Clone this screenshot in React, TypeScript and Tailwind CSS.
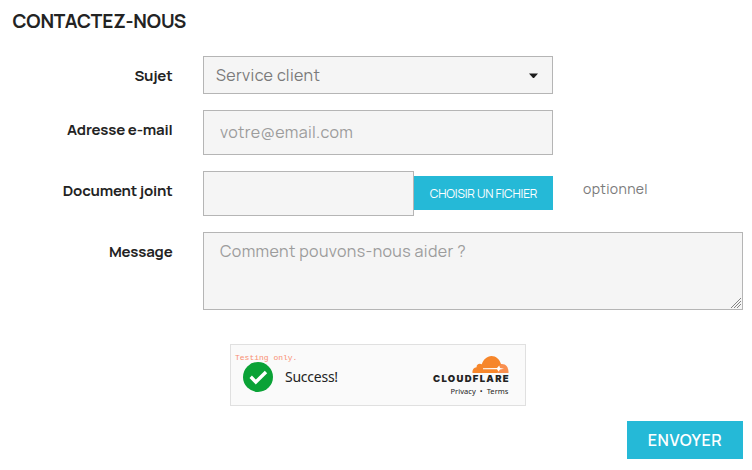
import type { ReactNode } from "react";

function Row({ label, children }: { label: string; children: ReactNode }) {
  return (
    <div className="flex items-start">
      <label className="mr-[30.5px] w-[172.5px] shrink-0 pt-[10px] text-right text-[15px] leading-5 font-bold tracking-[-0.2px] text-[#232323] whitespace-nowrap">
        {label}
      </label>
      {children}
    </div>
  );
}

function CloudflareLogo() {
  return (
    <svg className="mr-px" width="37" height="17" viewBox="0 0 37 17">
      <path d="M0.500 17C0.200 13.500 2 11.500 4.600 11.300C4.200 8.500 7.300 6.800 9.800 8.300C11.300 3.600 15 0 19.500 0C24 0 27.500 3.300 28.800 7.400L29.500 10.500L25.500 17Z" fill="#f6862b" />
      <path d="M25.500 17L28.500 8.200C33 7.300 36.800 10.600 36.500 17Z" fill="#f98f4f" />
      <path d="M11 12.300L25 12.100L27.300 9.500L28 12L32 12.700L28 13.500L26.500 15.500L25 13.300L11 13.200Z" fill="#fff" />
    </svg>
  );
}

const field = "border border-[#b5b5b5] bg-[#f5f5f5] outline-none rounded-none";

export default function App() {
  return (
    <main className="w-[752px] h-[470px] overflow-hidden bg-white font-['Manrope','Inter',sans-serif] text-[#232323]">
      <h1 className="h-[56px] pl-[12.5px] pt-[9px] text-[19px] leading-6 font-bold tracking-[-0.18px]">CONTACTEZ-NOUS</h1>
      <form className="flex flex-col gap-4" onSubmit={(e) => e.preventDefault()}>
        <Row label="Sujet">
          <button type="button" className={`${field} flex h-[38px] w-[350px] items-center justify-between pl-[12px] pr-[14px] text-[16px] tracking-[0.36px] text-[#7a7a7a]`}>
            <span>Service client</span>
            <svg width="9" height="5" viewBox="0 0 9 5"><path d="M0 0.500H9L5 5H4Z" fill="#1c1c1c" /></svg>
          </button>
        </Row>
        <Row label="Adresse e-mail">
          <input placeholder="votre@email.com" className={`${field} h-[45px] w-[350px] px-4 pb-[2px] text-[16px] tracking-[0.36px] placeholder:text-[#9c9c9c]`} />
        </Row>
        <Row label="Document joint">
          <input className={`${field} h-[45px] w-[211px]`} />
          <button type="button" className="mt-[5px] h-[34px] w-[139px] bg-[#25b9d7] pt-px text-[12px] tracking-[-0.16px] text-white whitespace-nowrap">CHOISIR UN FICHIER</button>
          <span className="ml-[30px] pt-[8px] text-[14px] leading-5 tracking-[0.35px] text-[#7a7a7a]">optionnel</span>
        </Row>
        <Row label="Message">
          <div className="relative h-[78px] w-[540px]">
            <textarea placeholder="Comment pouvons-nous aider ?" className={`${field} block h-full w-full resize-none px-4 py-[6px] text-[16px] leading-6 tracking-[0.38px] placeholder:text-[#9c9c9c]`} />
            <svg className="absolute right-[2px] bottom-[2px]" width="10" height="10" viewBox="0 0 10 10" stroke="#777" strokeWidth="0.9">
              <path d="M0 10L10 0M3 10L10 3M6 10L10 6" />
            </svg>
          </div>
        </Row>
      </form>
      <section className="mt-[34px] ml-[230px] flex h-[62px] w-[296px] justify-between border border-[#e0e0e0] bg-[#fafafa] font-['Noto_Sans',sans-serif]">
        <div className="pl-[4px] pt-[8px]">
          <p className="h-[9px] font-['Liberation_Mono',monospace] text-[8px] leading-[9px] text-[#f98f72] whitespace-nowrap">Testing only.</p>
          <div className="flex items-center pl-[8px]">
            <svg width="30" height="30" viewBox="0 0 30 30"><circle cx="15" cy="15" r="15" fill="#0aa236" /><path d="M7.700 14.800L12.800 20L23 10" fill="none" stroke="#fff" strokeWidth="3.400" /></svg>
            <span className="ml-[12px] text-[14px] leading-5 tracking-[-0.25px]">Success!</span>
          </div>
        </div>
        <div className="flex w-[78px] mr-[15px] flex-col items-end pt-[11px]">
          <CloudflareLogo />
          <b className="mt-px h-[10px] font-['Inter'] text-[9.5px] leading-[10px] font-black tracking-[1.3px]">CLOUDFLARE</b>
          <span className="mt-[2px] mr-[1.5px] text-[7.5px] leading-[10px] tracking-[0.05px] whitespace-pre">Privacy  •  Terms</span>
        </div>
      </section>
      <div className="mt-[15px] flex justify-end pr-[9px]">
        <button className="h-[38px] w-[116px] bg-[#25b9d7] text-[16px] font-semibold tracking-[0.5px] text-white">ENVOYER</button>
      </div>
    </main>
  );
}
